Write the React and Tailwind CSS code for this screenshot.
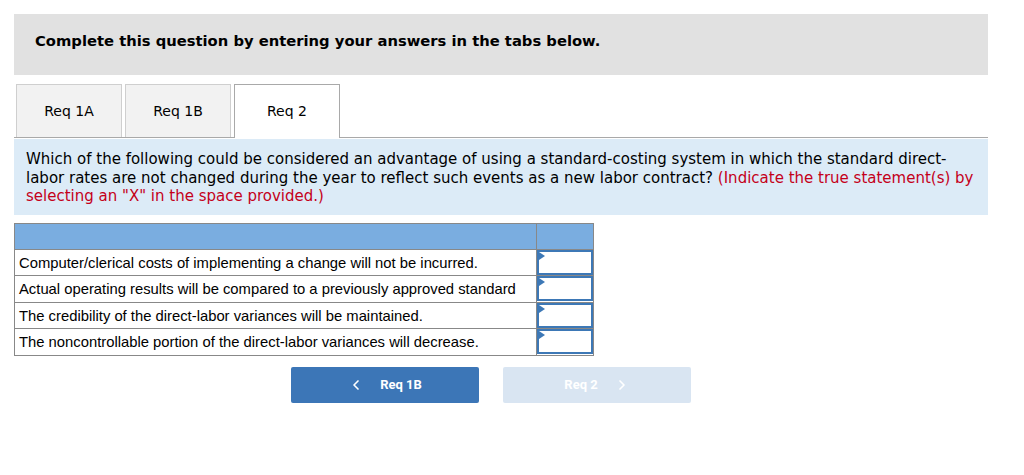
import { ChevronLeft, ChevronRight } from "lucide-react";

const rows = [
  "Computer/clerical costs of implementing a change will not be incurred.",
  "Actual operating results will be compared to a previously approved standard",
  "The credibility of the direct-labor variances will be maintained.",
  "The noncontrollable portion of the direct-labor variances will decrease.",
];

const AnswerCell = () => (
  <td className="relative w-[57px] border border-[#888] p-0 bg-white">
    <div className="h-[25px] border-2 border-[#3d78b6] bg-white" />
    <div className="absolute left-[2px] top-[2px] w-0 h-0 border-t-[4px] border-b-[4px] border-l-[6px] border-t-transparent border-b-transparent border-l-[#3d78b6]" />
  </td>
);

export default function App() {
  return (
    <div className="min-h-[475px] bg-white pt-[14px] pl-[14px] font-['DejaVu_Sans',sans-serif]">
      <div className="w-[974px]">
        <div className="h-[61px] bg-[#e1e1e1] pl-[21px] pt-[15px]">
          <span className="text-[14.75px] leading-[20px] font-bold text-black">
            Complete this question by entering your answers in the tabs below.
          </span>
        </div>

        <div className="mt-[9px] flex items-end gap-[3px] pl-[2px] border-b border-[#a9a9a9] h-[54px]">
          <button className="w-[106px] h-[53px] bg-[#f2f2f2] border border-b-0 border-[#cfcfcf] text-[14px] text-black">
            Req 1A
          </button>
          <button className="w-[106px] h-[53px] bg-[#f2f2f2] border border-b-0 border-[#cfcfcf] text-[14px] text-black">
            Req 1B
          </button>
          <button className="w-[106px] h-[54px] -mb-px bg-white border border-b-0 border-[#a9a9a9] text-[14px] text-black">
            Req 2
          </button>
        </div>

        <div className="mt-px bg-[#dcebf7] px-[12px] pt-[11px] pb-[9px] text-[15px] leading-[18.5px] text-black">
          Which of the following could be considered an advantage of using a
          standard-costing system in which the standard direct-labor rates are
          not changed during the year to reflect such events as a new labor
          contract?{" "}
          <span className="text-[#c4001a]">
            (Indicate the true statement(s) by selecting an "X" in the space
            provided.)
          </span>
        </div>

        <table className="mt-[8px] w-[580px] border-collapse font-['Liberation_Sans',sans-serif] text-[14.8px] text-black">
          <tbody>
            <tr className="h-[26px] bg-[#7aade0]">
              <td className="border border-[#888]" />
              <td className="w-[57px] border border-[#888]" />
            </tr>
            {rows.map((r) => (
              <tr key={r} className="h-[26.5px]">
                <td className="border border-[#888] px-[4px] pt-[2px] pb-0 leading-[23px]">
                  {r}
                </td>
                <AnswerCell />
              </tr>
            ))}
          </tbody>
        </table>

        <div className="mt-[11px] flex gap-[24px] pl-[277px]">
          <button className="w-[188px] h-[36px] rounded-[2px] bg-[#3c76b7] text-white text-[13px] font-bold flex items-center justify-center gap-[16px] font-['Roboto',sans-serif]">
            <ChevronLeft className="w-[16px] h-[16px]" strokeWidth={2.5} />
            Req 1B
          </button>
          <button className="w-[188px] h-[36px] rounded-[2px] bg-[#d9e5f2] text-white text-[13px] font-bold flex items-center justify-center gap-[16px] font-['Roboto',sans-serif]">
            Req 2
            <ChevronRight className="w-[16px] h-[16px]" strokeWidth={2.5} />
          </button>
        </div>
      </div>
    </div>
  );
}
